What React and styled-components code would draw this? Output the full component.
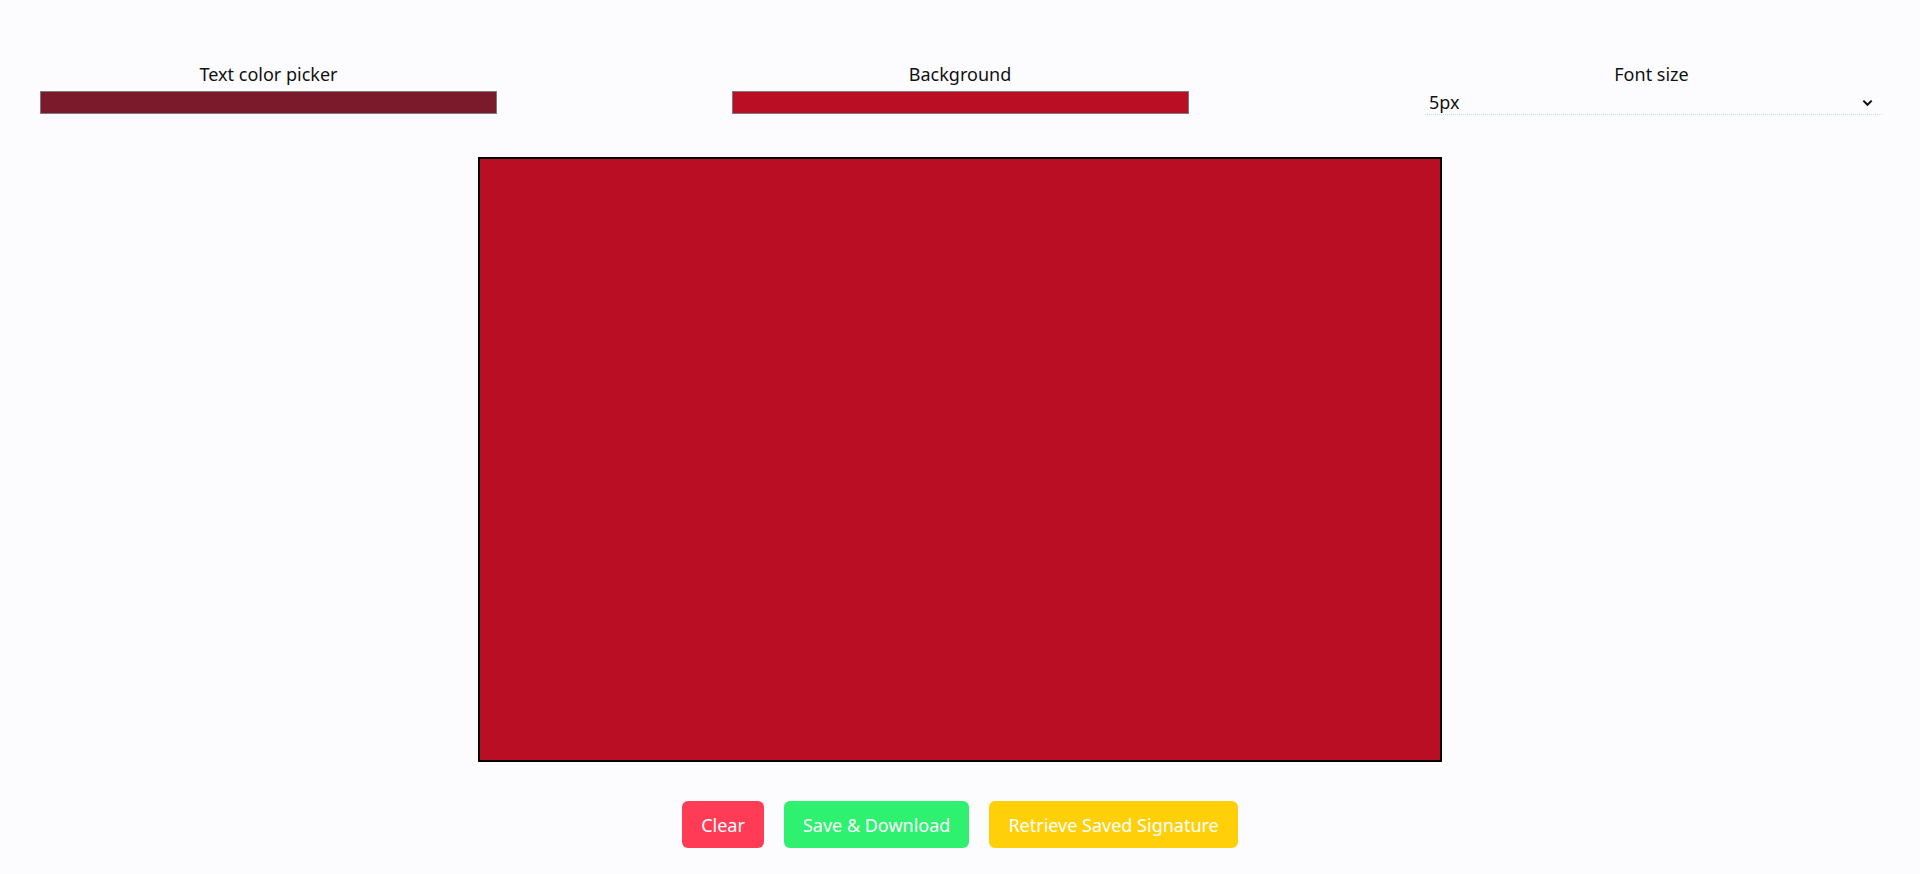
import React, { useState } from 'react'
import styled, { createGlobalStyle } from 'styled-components'

const GlobalStyle = createGlobalStyle`
    * { box-sizing: border-box; }
    body {
        margin: 0;
        background: #fcfcfe;
        font-family: "Noto Sans", "Open Sans", sans-serif;
        color: #111;
    }
`;

const Page = styled.main`
    display: flex;
    flex-direction: column;
    align-items: center;
    padding-top: 62px;
    min-height: 100vh;
`;

const Toolbar = styled.div`
    display: flex;
    justify-content: space-between;
    width: 100%;
    padding: 0 40px;
`;

const Field = styled.label`
    display: flex;
    flex-direction: column;
    align-items: center;
    width: 457px;
    font-size: 18px;
    line-height: 24px;
    gap: 5px;
`;

const ColorInput = styled.input`
    -webkit-appearance: none;
    appearance: none;
    width: 100%;
    height: 23px;
    padding: 0;
    border: 1px solid #7b7b7b;
    background: ${p => p.value};
    cursor: pointer;

    &::-webkit-color-swatch-wrapper { padding: 0; }
    &::-webkit-color-swatch { border: none; }
`;

const SelectWrap = styled.div`
    position: relative;
    width: 100%;
    margin-left: 4px;
    margin-top: -1px;
`;

const Select = styled.select`
    -webkit-appearance: none;
    appearance: none;
    width: 100%;
    height: 25px;
    padding: 0 0 0 4px;
    border: none;
    border-bottom: 1px dotted #c9dcef;
    background: transparent;
    font: inherit;
    font-size: 18px;
    color: #111;
    outline: none;
`;

const Chevron = styled.svg`
    position: absolute;
    right: 8px;
    top: 6px;
    pointer-events: none;
`;

const Canvas = styled.canvas`
    display: block;
    margin-top: 42px;
    width: 964px;
    height: 605px;
    border: 2px solid #000;
    background: ${p => p.$bg};
`;

const Actions = styled.div`
    display: flex;
    gap: 20px;
    margin-top: 39px;
`;

const Button = styled.button`
    height: 47px;
    padding: 0 19px;
    border: none;
    border-radius: 6px;
    background: ${p => p.$color};
    color: #fff;
    font-family: inherit;
    font-size: 18px;
    cursor: pointer;
`;

const sizes = ['5px', '10px', '15px', '20px', '25px', '30px']

const App = () => {
    const [textColor, setTextColor] = useState('#7a1a2a')
    const [bg, setBg] = useState('#b90e24')
    const [size, setSize] = useState('5px')

    return (
        <Page>
            <GlobalStyle />
            <Toolbar>
                <Field>
                    Text color picker
                    <ColorInput type="color" value={textColor} onChange={e => setTextColor(e.target.value)} />
                </Field>
                <Field>
                    Background
                    <ColorInput type="color" value={bg} onChange={e => setBg(e.target.value)} />
                </Field>
                <Field as="div">
                    Font size
                    <SelectWrap>
                        <Select value={size} onChange={e => setSize(e.target.value)}>
                            {sizes.map(s => <option key={s} value={s}>{s}</option>)}
                        </Select>
                        <Chevron width="13" height="13" viewBox="0 0 14 14">
                            <path d="M2.5 5 L7 9.5 L11.5 5" fill="none" stroke="#111" strokeWidth="2.2" />
                        </Chevron>
                    </SelectWrap>
                </Field>
            </Toolbar>
            <Canvas $bg={bg} width="960" height="601" />
            <Actions>
                <Button $color="#ff3b55">Clear</Button>
                <Button $color="#2ef26f">Save &amp; Download</Button>
                <Button $color="#ffd00a">Retrieve Saved Signature</Button>
            </Actions>
        </Page>
    )
}

export default App
